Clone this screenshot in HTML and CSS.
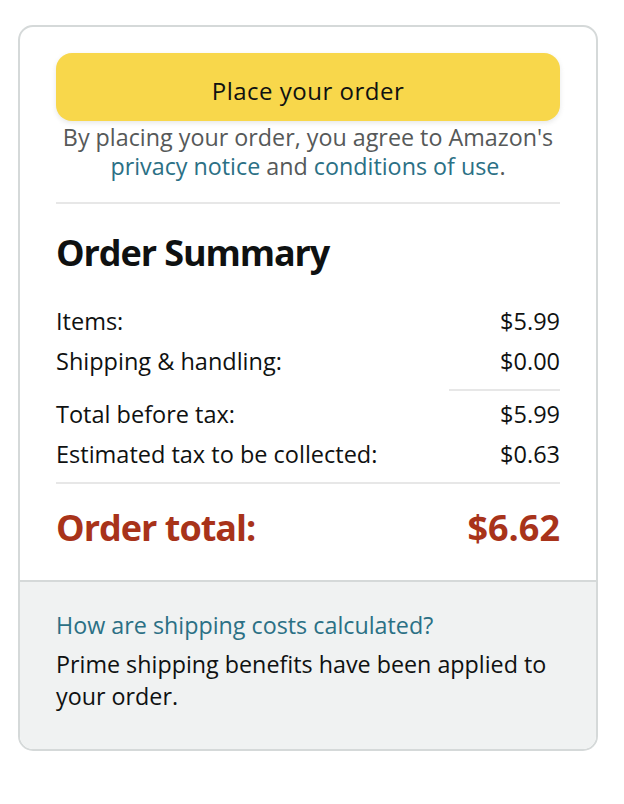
FILE: index.html
```html
<!DOCTYPE html>
<html lang="en">
<head>
<meta charset="utf-8">
<title>Order Summary</title>
<link rel="stylesheet" href="styles.css">
</head>
<body>
<div class="page">
  <div class="card">
    <div class="card-main">
      <button class="place-btn" type="button">Place your order</button>
      <p class="agree">By placing your order, you agree to Amazon's <a href="#" class="link">privacy notice</a> and <a href="#" class="link">conditions of use</a>.</p>
      <hr class="divider">
      <h2 class="summary-title">Order Summary</h2>
      <div class="row"><span>Items:</span><span>$5.99</span></div>
      <div class="row"><span>Shipping &amp; handling:</span><span>$0.00</span></div>
      <div class="short-divider"></div>
      <div class="row"><span>Total before tax:</span><span>$5.99</span></div>
      <div class="row"><span>Estimated tax to be collected:</span><span>$0.63</span></div>
      <hr class="divider divider-total">
      <div class="total-row"><span class="total-label">Order total:</span><span>$6.62</span></div>
    </div>
    <div class="card-foot">
      <a href="#" class="link foot-link">How are shipping costs calculated?</a>
      <p class="foot-text">Prime shipping benefits have been applied to your order.</p>
    </div>
  </div>
</div>
</body>
</html>
```
FILE: styles.css
```css
* { box-sizing: border-box; }
html, body { margin: 0; padding: 0; background: #fff; }
body {
  font-family: "Open Sans", "Noto Sans", "Liberation Sans", sans-serif;
  font-size: 23.3px;
  color: #0f1111;
}
.page {
  padding: 25px 0 0 18px;
}
.card {
  width: 580px;
  border: 2px solid #d5d9d9;
  border-radius: 15px;
  overflow: hidden;
  background: #fff;
}
.card-main {
  padding: 26px 36px 30px 36px;
  display: flex;
  flex-direction: column;
}
.place-btn {
  display: block;
  width: 100%;
  height: 68px;
  padding: 8px 0 0 0;
  margin: 0;
  border: 0;
  border-radius: 16px;
  background: #f8d74b;
  box-shadow: 0 2px 5px 0 rgba(213, 217, 217, 0.6);
  font-family: inherit;
  font-size: 24px;
  letter-spacing: 0.5px;
  line-height: 60px;
  color: #0f1111;
  text-align: center;
}
.agree {
  margin: 1.5px 0 0 0;
  padding-bottom: 21.5px;
  text-align: center;
  color: #565959;
  line-height: 29px;
}
.link {
  color: #2b7085;
  text-decoration: none;
}
.divider {
  margin: 0;
  border: 0;
  height: 2px;
  background: #e7e7e7;
}
.summary-title {
  margin: 26.5px 0 26.5px 0;
  font-size: 36px;
  letter-spacing: -1.1px;
  line-height: 44px;
  font-weight: 700;
}
.row {
  display: flex;
  justify-content: space-between;
  font-size: 23.5px;
  line-height: 40px;
}
.short-divider {
  align-self: flex-end;
  width: 111px;
  height: 2px;
  background: #e7e7e7;
  margin: 7.5px 0 3.5px 0;
}
.divider-total {
  margin-top: 8px;
}
.total-row {
  display: flex;
  justify-content: space-between;
  margin-top: 21.5px;
  font-size: 36px;
  line-height: 44px;
  font-weight: 700;
  color: #a8331a;
}
.total-label {
  letter-spacing: -1px;
}
.card-foot {
  background: #f0f2f2;
  border-top: 2px solid #d5d9d9;
  padding: 27px 36px 37px 36px;
}
.foot-link {
  display: block;
  line-height: 32px;
}
.foot-text {
  margin: 7px 0 0 0;
  line-height: 32px;
}
```
